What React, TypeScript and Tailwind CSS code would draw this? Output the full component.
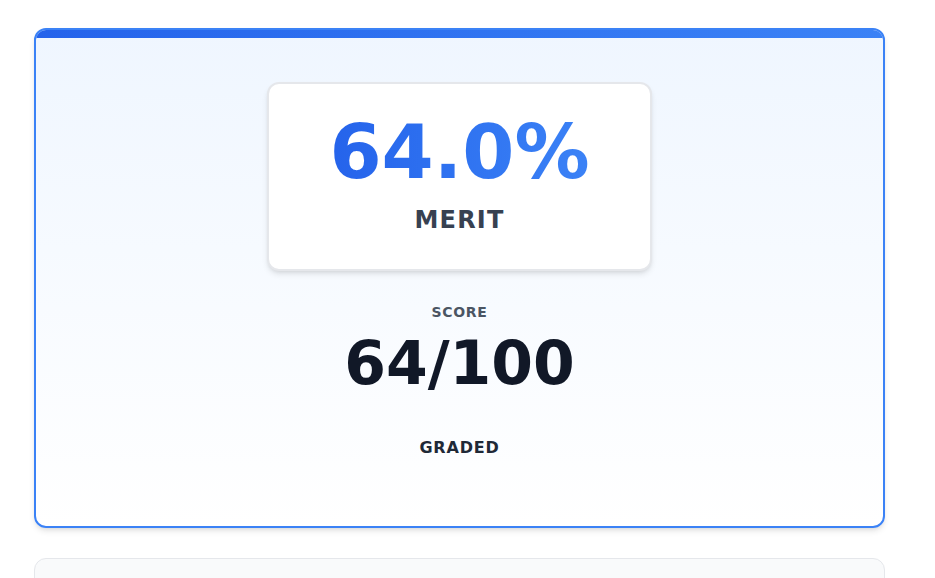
import React from "react";

export default function App() {
  return (
    <div className="min-h-screen bg-white pt-[28px] pl-[34px] font-['DejaVu_Sans',sans-serif]">
      <div className="w-[851px] flex flex-col">
        <div className="overflow-hidden rounded-xl border-2 border-[#3b82f6] bg-linear-to-b from-[#eff6ff] to-white shadow-md">
          <div className="h-2 bg-linear-to-r from-[#2563eb] to-[#3b82f6]" />
          <div className="flex flex-col items-center pt-[44px] pb-[66px]">
            <div className="w-[385px] flex flex-col items-center rounded-xl border-2 border-[#e5e7eb] bg-white pt-[31px] pb-[33px] shadow-md">
              <div className="text-[75px] leading-none font-bold bg-linear-to-r from-[#2563eb] to-[#3b82f6] bg-clip-text text-transparent">
                64.0%
              </div>
              <div className="mt-[14px] text-2xl font-bold tracking-wider text-[#374151]">
                MERIT
              </div>
            </div>
            <div className="mt-[31px] text-sm leading-5 font-bold tracking-wider text-[#4b5563]">
              SCORE
            </div>
            <div className="mt-[11px] text-6xl leading-none font-bold text-[#111827]">
              64/100
            </div>
            <div className="mt-[43px] text-base leading-6 font-bold tracking-wider text-[#1f2937]">
              GRADED
            </div>
          </div>
        </div>
        <div className="mt-[30px] h-[80px] rounded-xl border border-[#e5e7eb] bg-[#f9fafb]" />
      </div>
    </div>
  );
}
